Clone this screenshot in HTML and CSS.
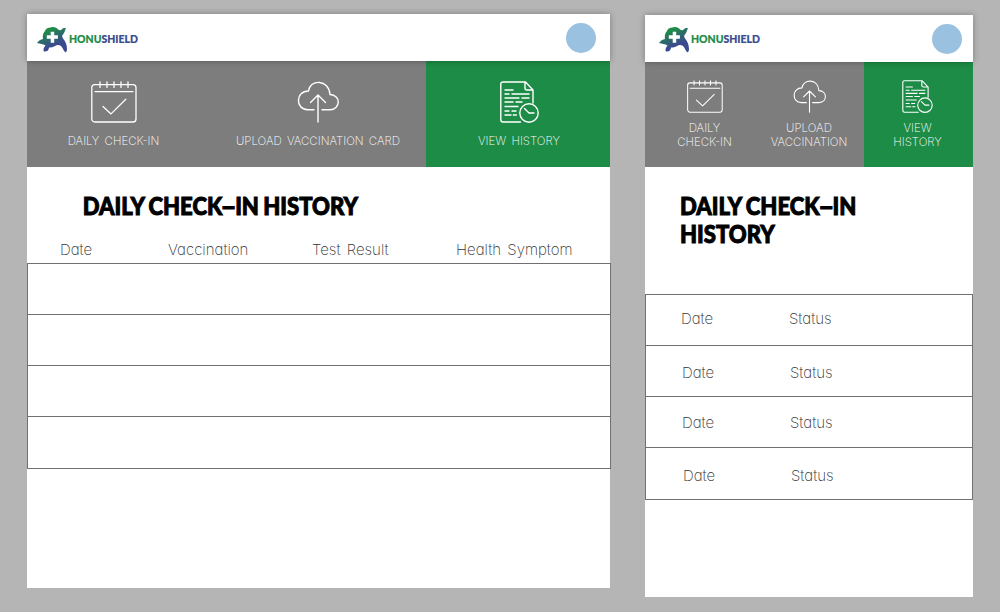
FILE: index.html
```
<!DOCTYPE html>
<html lang="en">
<head>
<meta charset="utf-8">
<title>HonuShield</title>
<link rel="stylesheet" href="styles.css">
</head>
<body>
<svg class="defs" width="0" height="0" aria-hidden="true">
  <defs>
    <linearGradient id="shell" x1="0" y1="0" x2="0.5" y2="1">
      <stop offset="0.25" stop-color="#1d8c46"/>
      <stop offset="0.8" stop-color="#3b4a8f"/>
    </linearGradient>
    <symbol id="turtle" viewBox="0 0 31 26">
      <path fill="url(#shell)" d="M8 4C9 1 12 .5 14 .5C16 -.5 20 .5 21 2.500C23 3.500 24 3.500 25 2C26 .8 28 .8 29 1.500C28 3 28 4 27 6C26.500 7 25.500 8 25 9L26 11.500C28.500 14 30 18 30 22C30 24 29 26 28 25C26 23 26 21 24 19C22 17.500 20 17.500 18 19C16 20.500 14 20.500 12 20.500C12 23 10 25 7 24.500C6 23 6.500 21 8.500 18.500C6 17 3 17 0 16C2 13 4 12.500 6 12C5.500 9 6 6 8 4Z"/>
      <path fill="#fff" d="M13.700 4.800h3.500v3.500h3.700v3.400h-3.700v4h-3.500v-4H9.800V8.300h3.900z"/>
    </symbol>
    <symbol id="calendar" viewBox="0 0 46 42">
      <g fill="none" stroke="#fff" stroke-width="1.300" stroke-linecap="round" stroke-linejoin="round">
        <rect x="0.8" y="3.6" width="44.2" height="37.4" rx="3"/>
        <path d="M4 10.600h38M12 25.500l8 7.400 14.800-14.600M9 .8v5.600M16 .8v5.600M23 .8v5.600M30 .8v5.600M37 .8v5.600"/>
      </g>
    </symbol>
    <symbol id="cloud" viewBox="0 0 42 42">
      <g fill="none" stroke="#fff" stroke-width="1.400" stroke-linecap="round" stroke-linejoin="round">
        <path d="M17 28.800H10.500C-2 28 -1.500 10 11.500 10C13 -2 32 -2 33 13.500C44 14 44 28 33 28.800H25M21 41V14M13.500 21.500L21 14L28.500 21.500"/>
      </g>
    </symbol>
    <symbol id="history" viewBox="0 0 39 42">
      <g fill="none" stroke="#fff" stroke-width="1.400" stroke-linecap="round" stroke-linejoin="round">
        <path d="M20.500 41H3Q.8 41 .8 38.500V3Q.8 1 3 1H25.500L33 9V22M25 1V7Q25 9 27 9H33"/>
        <path stroke-linecap="butt" d="M4.500 9h9M4.500 13h5M11.500 13h18M4.500 17h15M21.500 17h8M4.500 21h9M15.500 21h7M4.500 25.500h14M4.500 30h5M11.500 30h5M4.500 34h7M12.800 34h4"/>
        <circle cx="29" cy="32" r="9.200"/>
        <path d="M24.500 27.500l4.500 4.500h5"/>
      </g>
    </symbol>
  </defs>
</svg>
<main class="board">
  <section class="screen desktop">
    <header class="header">
      <div class="brand">
        <svg class="turtle"><use href="#turtle"/></svg>
        <span class="wordmark"><span class="honu">HONU</span>SHIELD</span>
      </div>
      <div class="avatar"></div>
    </header>
    <nav class="nav">
      <a class="tab checkin"><svg class="icon calendar"><use href="#calendar"/></svg><span class="label">DAILY CHECK-IN</span></a>
      <a class="tab upload"><svg class="icon cloud"><use href="#cloud"/></svg><span class="label">UPLOAD VACCINATION CARD</span></a>
      <a class="tab active"><svg class="icon history"><use href="#history"/></svg><span class="label">VIEW HISTORY</span></a>
    </nav>
    <h1 class="title">DAILY CHECK<span class="dash">–</span>IN HISTORY</h1>
    <div class="columns"><span class="date">Date</span><span class="vaccination">Vaccination</span><span class="result">Test Result</span><span class="symptom">Health Symptom</span></div>
    <div class="rows"><div class="row"></div><div class="row"></div><div class="row"></div><div class="row last"></div></div>
  </section>
  <section class="screen mobile">
    <header class="header">
      <div class="brand">
        <svg class="turtle"><use href="#turtle"/></svg>
        <span class="wordmark"><span class="honu">HONU</span>SHIELD</span>
      </div>
      <div class="avatar"></div>
    </header>
    <nav class="nav">
      <a class="tab checkin"><svg class="icon calendar"><use href="#calendar"/></svg><span class="label">DAILY<br>CHECK-IN</span></a>
      <a class="tab upload"><svg class="icon cloud"><use href="#cloud"/></svg><span class="label">UPLOAD<br>VACCINATION</span></a>
      <a class="tab active"><svg class="icon history"><use href="#history"/></svg><span class="label">VIEW<br>HISTORY</span></a>
    </nav>
    <h1 class="title">DAILY CHECK<span class="dash">–</span>IN<br>HISTORY</h1>
    <div class="rows">
      <div class="row first"><span class="date">Date</span><span class="status">Status</span></div>
      <div class="row second"><span class="date">Date</span><span class="status">Status</span></div>
      <div class="row third"><span class="date">Date</span><span class="status">Status</span></div>
      <div class="row last"><span class="date">Date</span><span class="status">Status</span></div>
    </div>
  </section>
</main>
</body>
</html>
```
FILE: styles.css
```
* { box-sizing: border-box; }
body { margin: 0; background: #b5b5b5; font-family: Inter, "Liberation Sans", sans-serif; font-feature-settings: "cv11"; }
.defs { display: block; height: 0; }
.board { display: flex; align-items: flex-start; gap: 35px; height: 612px; padding: 14px 27px; overflow: hidden; }
.screen { background: #fff; flex: none; }
.desktop { width: 583px; height: 574px; }
.mobile { width: 328px; height: 582px; margin-top: 1px; }
.header { position: relative; display: flex; justify-content: space-between; height: 47px; padding: 9px 14px 0 10px; background: #fff; box-shadow: 0 0 6px rgba(0,0,0,.32); }
.mobile .header { padding: 9px 11px 0 14px; }
.brand { display: flex; gap: 1px; }
.turtle { width: 31px; height: 26px; margin-top: 4px; }
.mobile .turtle { margin-top: 3px; }
.wordmark { height: 16px; margin-top: 8px; font: 900 11px/16px Lato, sans-serif; color: #3b4a8f; -webkit-text-stroke: .2px currentColor; white-space: nowrap; transform: scaleX(.95); transform-origin: 0 0; }
.mobile .wordmark { margin-top: 7px; }
.honu { color: #1d8c46; }
.avatar { width: 30px; height: 30px; border-radius: 50%; background: #9ac1e0; }
.nav { display: flex; height: 106px; background: #7d7d7d; }
.mobile .nav { height: 105px; }
.tab { display: flex; flex-direction: column; align-items: center; padding-top: 20px; color: #fff; }
.desktop .checkin { width: 173px; }
.desktop .upload { width: 226px; padding-left: 10px; }
.desktop .active { width: 184px; padding-left: 2px; }
.mobile .tab { padding-top: 18px; }
.mobile .checkin { width: 119px; }
.mobile .upload { width: 100px; padding-right: 10px; }
.mobile .active { width: 109px; padding-right: 2px; }
.active { background: #1d8c46; }
.icon { flex: none; height: 42px; }
.calendar { width: 46px; }
.cloud { width: 42px; }
.history { width: 39px; }
.mobile .icon { height: 33px; }
.mobile .calendar { width: 36px; }
.mobile .cloud { width: 33px; }
.mobile .history { width: 31px; }
.label { margin-top: 11px; font-size: 11.500px; line-height: 14px; font-weight: 200; text-align: center; white-space: nowrap; }
.desktop .label { word-spacing: 2px; }
.mobile .label { margin-top: 8px; }
.title { margin: 0; font: 900 24px/28px Lato, sans-serif; color: #000; -webkit-text-stroke: 1px #000; white-space: nowrap; word-spacing: -1px; transform: scaleX(.92); transform-origin: 0 0; }
.dash { display: inline-block; transform: scaleX(1.25); }
.desktop .title { padding: 25px 0 0 60.500px; height: 67px; }
.mobile .title { padding: 25px 0 0 38px; height: 127px; }
.columns { display: grid; grid-template-columns: 108px 144px 144px 1fr; height: 29px; padding: 6px 0 0 33px; font-size: 15px; line-height: 20px; font-weight: 200; color: #333; word-spacing: 2px; white-space: nowrap; }
.rows { border: 1px solid #707070; }
.desktop .rows { margin-right: -1px; }
.row { height: 51px; border-bottom: 1px solid #707070; }
.row.last { border-bottom: 0; }
.mobile .row { display: flex; padding: 14px 0 0 35px; font-size: 15px; line-height: 20px; font-weight: 200; color: #333; }
.mobile .date { width: 108px; }
.mobile .second, .mobile .third { padding-left: 36px; }
.mobile .second { padding-top: 17px; }
.mobile .third { padding-top: 16px; }
.mobile .last { padding: 18px 0 0 37px; }
```
